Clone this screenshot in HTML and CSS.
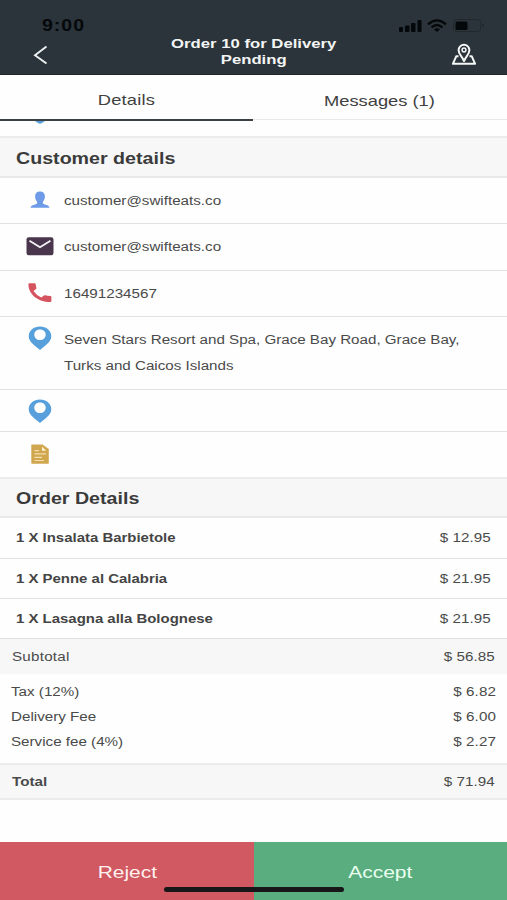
FILE: index.html
```html
<!DOCTYPE html>
<html lang="en">
<head>
<meta charset="utf-8">
<title>Order 10 for Delivery</title>
<link rel="stylesheet" href="styles.css">
</head>
<body>
<div class="screen">
  <header class="header">
    <div class="status">
      <span class="wide clock">9:00</span>
      <svg class="status-icons" width="88" height="16" viewBox="0 0 88 16">
        <g fill="#05080a">
          <rect x="1" y="9" width="4" height="5" rx="1"/><rect x="7" y="7.500" width="4.500" height="6.500" rx="1"/><rect x="13" y="5" width="4.500" height="9" rx="1"/><rect x="19.500" y="2" width="4" height="12" rx="1"/>
          <rect x="57.500" y="3.500" width="12" height="8.500" rx="1.500"/>
        </g>
        <g fill="none" stroke="#05080a" stroke-width="2.300"><path d="M30 6.300Q39-1.500 48 6.300M33.500 9.500Q39 4.500 44.500 9.500"/></g>
        <path d="M36 11.300Q39 9 42 11.300L39 14Z" fill="#05080a"/>
        <rect x="55.500" y="1.500" width="27" height="12" rx="3" fill="none" stroke="#20282c"/>
        <path d="M84.500 5.500Q87 7.500 84.500 9.500Z" fill="#1b2226"/>
      </svg>
    </div>
    <div class="bar">
      <svg class="back" width="16" height="20" viewBox="0 0 16 20"><path d="M13.500 1.500L2 10.200L13.500 18.500" fill="none" stroke="#eef1f2" stroke-width="1.900"/></svg>
      <h1 class="title"><span class="wide">Order 10 for Delivery<br>Pending</span></h1>
      <svg class="map" width="26" height="24" viewBox="0 0 26 24"><g fill="none" stroke="#f5f6f6" stroke-width="2" stroke-linejoin="round"><path d="M13 18C11 13.500 7.600 11 7.600 7.200A5.400 5.400 0 0 1 18.400 7.200C18.400 11 15 13.500 13 18Z"/><path d="M7.500 13.300H5.200L1.900 20.800H24.100L20.800 13.300H18.500"/></g><circle cx="13" cy="7" r="1.900" fill="none" stroke="#f5f6f6" stroke-width="1.500"/></svg>
    </div>
  </header>

  <nav class="tabs">
    <div class="tab active"><span class="wide">Details</span></div>
    <div class="tab"><span class="wide">Messages (1)</span></div>
  </nav>
  <div class="scrolled"><svg width="10" height="4" viewBox="0 0 10 4"><path d="M0 0H10L7 2Q5 3.500 3 2Z" fill="#57a0dc"/></svg></div>

  <h2 class="section"><span class="wide">Customer details</span></h2>
  <div class="row contact name">
    <svg width="28" height="28" viewBox="0 0 28 28"><path d="M14 4.500C17 4.500 18.900 6.300 18.900 9.300C18.900 11.500 18.300 13.300 16.900 14.700V16.300C17.600 18 23 17.500 23.400 20.700H4.600C5 17.500 10.400 18 11.100 16.300V14.700C9.700 13.300 9.100 11.500 9.100 9.300C9.100 6.300 11 4.500 14 4.500Z" fill="#6d9be8"/></svg>
    <span class="wide">customer@swifteats.co</span>
  </div>
  <div class="row contact mail">
    <svg width="28" height="28" viewBox="0 0 28 28"><rect x=".500" y="4.200" width="27" height="18" rx="2.200" fill="#49364d"/><path d="M3.500 7.700L14 14.200L24.500 7.700" fill="none" stroke="#f5f1f6" stroke-width="1.900"/></svg>
    <span class="wide">customer@swifteats.co</span>
  </div>
  <div class="row contact phone">
    <svg width="28" height="28" viewBox="0 0 28 28"><path transform="translate(0 -1.300)" d="M3.500 4.500H8.600Q9.600 4.500 9.700 5.500Q9.800 7.500 10.400 9Q10.600 9.800 10 10.300L7.500 12.400Q10.200 16.600 15.300 18.800L18 16.800Q18.500 16.400 19.300 16.600Q21.400 17.100 24.200 17.300Q25.400 17.400 25.400 18.400V22.300Q25.400 23.300 24.200 23.300C12 23.300 2.400 15.500 2.400 5.500Q2.400 4.500 3.500 4.500Z" fill="#d4535e"/></svg>
    <span class="wide">16491234567</span>
  </div>
  <div class="row contact address">
    <svg width="28" height="28" viewBox="0 0 28 28"><path fill-rule="evenodd" d="M14 2.500C20.300 2.500 25.300 6.600 25.300 12.300C25.300 18.300 18.500 22 14 26C9.500 22 2.700 18.300 2.700 12.300C2.700 6.600 7.700 2.500 14 2.500ZM14 5.500C10.700 5.500 8.300 7.700 8.300 10.700S10.700 16 14 16S19.700 13.700 19.700 10.700S17.300 5.500 14 5.500Z" fill="#57a0dc"/></svg>
    <span class="wide">Seven Stars Resort and Spa, Grace Bay Road, Grace Bay,<br>Turks and Caicos Islands</span>
  </div>
  <div class="row contact place">
    <svg width="28" height="28" viewBox="0 0 28 28"><path fill-rule="evenodd" d="M14 2.500C20.300 2.500 25.300 6.600 25.300 12.300C25.300 18.300 18.500 22 14 26C9.500 22 2.700 18.300 2.700 12.300C2.700 6.600 7.700 2.500 14 2.500ZM14 5.500C10.700 5.500 8.300 7.700 8.300 10.700S10.700 16 14 16S19.700 13.700 19.700 10.700S17.300 5.500 14 5.500Z" fill="#57a0dc"/></svg>
  </div>
  <div class="row contact note">
    <svg width="28" height="28" viewBox="0 0 28 28"><g transform="translate(0 -1)"><path d="M6 4.500H16.500L22.800 9V23Q22.800 23.700 22 23.700H6Q5.300 23.700 5.300 23V5.200Q5.300 4.500 6 4.500Z" fill="#d0a74e"/><path d="M16 6.800V10.800H20.200Z" fill="#fff4d8"/><path d="M8.500 10.700H13M8.500 13.900H20M8.500 17.300H16M8.500 20.500H18" fill="none" stroke="#f4dfae" stroke-width="1.200"/></g></svg>
  </div>

  <h2 class="section order"><span class="wide">Order Details</span></h2>
  <div class="row item first"><b class="wide">1 X Insalata Barbietole</b><span class="wide price">$ 12.95</span></div>
  <div class="row item"><b class="wide">1 X Penne al Calabria</b><span class="wide price">$ 21.95</span></div>
  <div class="row item"><b class="wide">1 X Lasagna alla Bolognese</b><span class="wide price">$ 21.95</span></div>
  <div class="sum subtotal"><span class="wide">Subtotal</span><span class="wide price">$ 56.85</span></div>
  <div class="fees">
    <div class="fee"><span class="wide">Tax (12%)</span><span class="wide price">$ 6.82</span></div>
    <div class="fee"><span class="wide">Delivery Fee</span><span class="wide price">$ 6.00</span></div>
    <div class="fee"><span class="wide">Service fee (4%)</span><span class="wide price">$ 2.27</span></div>
  </div>
  <div class="sum total"><b class="wide">Total</b><span class="wide price">$ 71.94</span></div>

  <footer class="actions">
    <div class="action reject"><span class="wide">Reject</span></div>
    <div class="action accept"><span class="wide">Accept</span></div>
    <div class="home"></div>
  </footer>
</div>
</body>
</html>
```
FILE: styles.css
```css
* { box-sizing: border-box; }
body { margin: 0; background: #fefefe; }
.screen {
  width: 507px; height: 900px; overflow: hidden;
  display: flex; flex-direction: column;
  background: #fefefe; color: #4a4a4a;
  font: 12.45px/16px "Liberation Sans", Arial, sans-serif;
}
svg { display: block; flex: none; }

/* expanded letterforms */
.wide { display: inline-block; white-space: nowrap; transform: scaleX(1.22); transform-origin: left center; }
.price { transform-origin: right center; letter-spacing: .05px; }

.header { height: 75px; flex: none; background: #2b343a; color: #f4f5f5; border-bottom: 1px solid #1f282d; }
.status { height: 36px; padding: 18px 21px 0 42px; display: flex; justify-content: space-between; }
.clock { color: #05080a; font-size: 16px; font-weight: bold; letter-spacing: .8px; }
.bar { display: flex; justify-content: space-between; padding: 0 30px 0 33px; }
.back { margin-top: 9px; }
.map { margin-top: 7px; }
.title { margin: 0 0 0 8px; font-size: 13.7px; line-height: 16px; text-align: center; }
.title .wide, .tab .wide, .action .wide { transform-origin: center; }

.tabs { display: flex; height: 46px; flex: none; font-size: 15px; color: #404040; }
.tab { flex: 1; height: 45px; display: flex; align-items: center; justify-content: center; padding: 7px 1px 0 0; border-bottom: 1px solid #e8e8e8; }
.tab.active { height: 46px; flex: 0 0 253px; padding-top: 5px; border-bottom: 2px solid #3b4145; letter-spacing: .15px; }
.scrolled { height: 15px; flex: none; padding: 0 0 0 35px; }

.section { margin: 0; flex: none; height: 42px; display: flex; align-items: center; padding: 2px 16px 0; background: #f7f7f7; border-top: 2px solid #ebebeb; border-bottom: 2px solid #e9e9e9; font-size: 16.1px; color: #3b3b3b; }
.section.order { height: 41px; padding-top: 1px; }
.row { flex: none; border-bottom: 1px solid #e2e2e2; }
.contact { display: flex; align-items: center; gap: 10px; padding-left: 26px; }
.name { height: 46px; }
.mail { height: 47px; }
.phone { height: 46px; }
.address { height: 73px; align-items: flex-start; padding-top: 7px; line-height: 26px; }
.address .wide { margin-top: 3px; letter-spacing: -.01px; }
.place { height: 42px; }
.note { height: 45px; border-bottom: 0; }
.item { height: 40px; display: flex; align-items: center; justify-content: space-between; padding: 0 16px; font-size: 12.25px; }
.item.first { height: 41px; }
.item b { color: #444; }
.item .price { font-size: 12.45px; }
.sum { flex: none; display: flex; align-items: center; justify-content: space-between; padding: 0 12px; background: #f7f7f7; }
.subtotal { height: 35px; letter-spacing: .2px; }
.fees { height: 89px; flex: none; padding: 5px 11px 0; }
.fee { height: 25px; display: flex; align-items: center; justify-content: space-between; }
.total { height: 37px; border-top: 2px solid #ebebeb; border-bottom: 2px solid #ebebeb; }

.actions { position: relative; display: flex; height: 58px; flex: none; margin-top: auto; color: #fff1ee; font-size: 17.200px; }
.action { flex: 1; display: flex; align-items: center; justify-content: center; padding-top: 2px; }
.reject { flex: 0 0 254px; background: #d05962; }
.accept { background: #59ad7e; color: #e9fff0; }
.home { position: absolute; left: 164px; top: 45px; width: 180px; height: 5px; border-radius: 3px; background: #171719; }
```
